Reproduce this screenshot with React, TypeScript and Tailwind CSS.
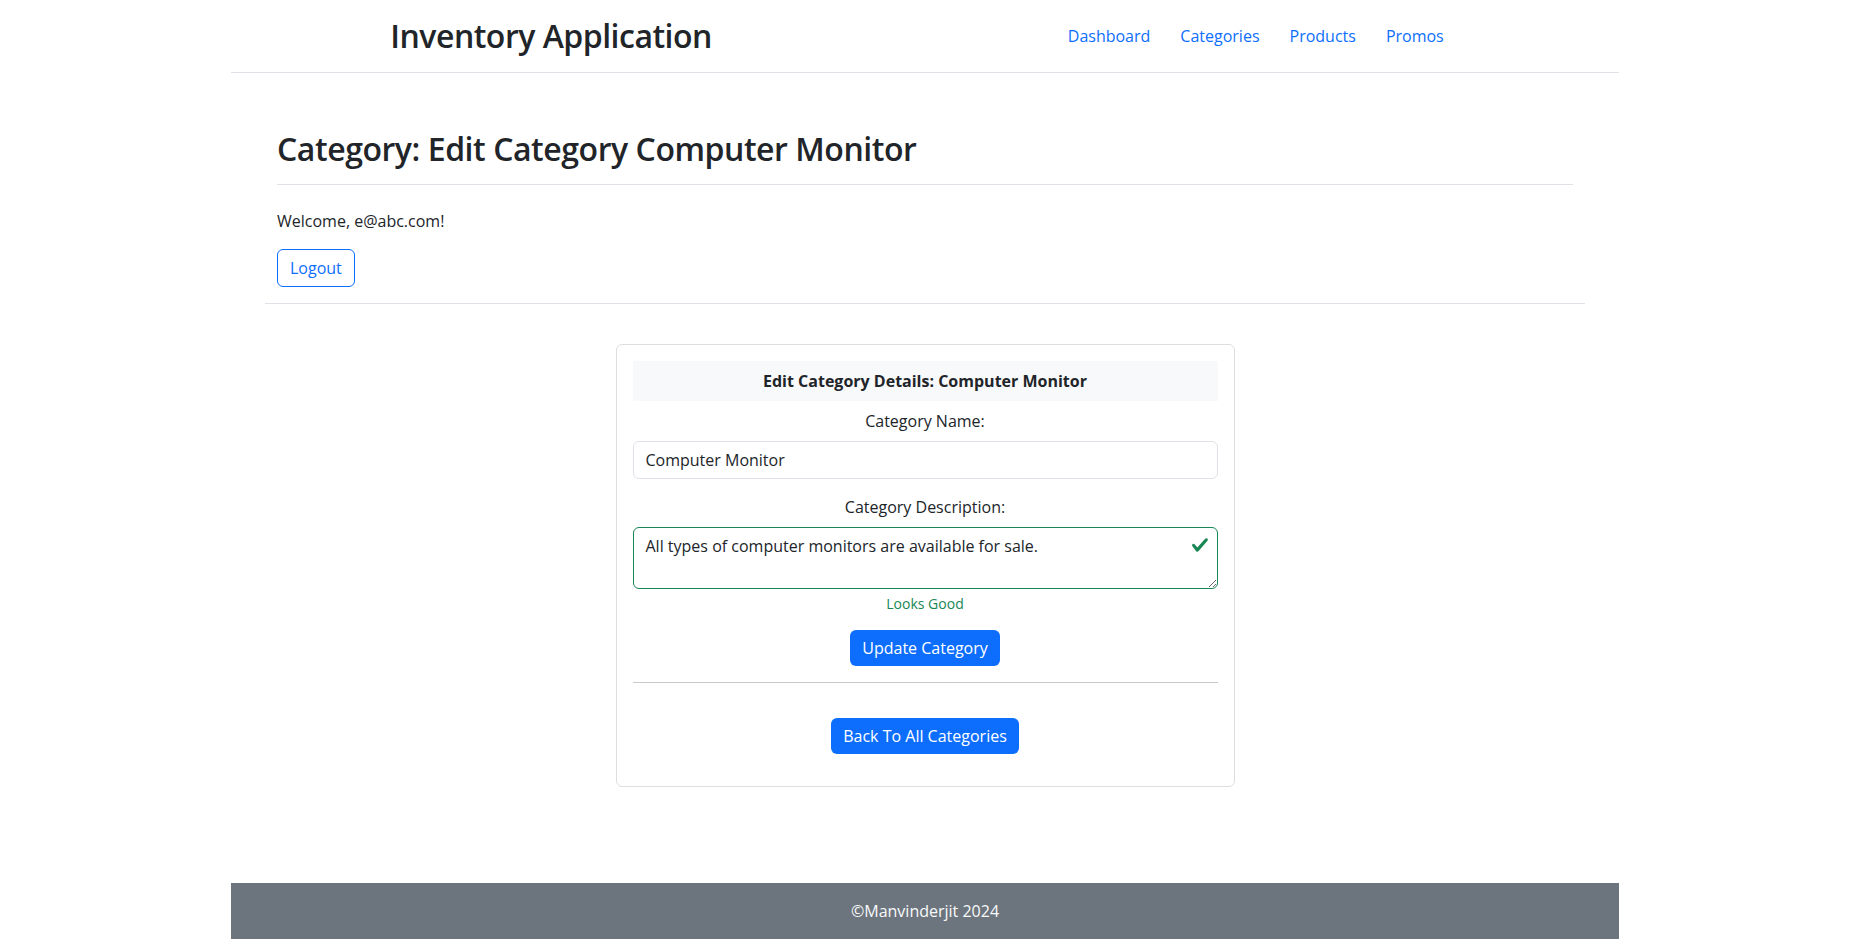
import React from "react";

function CheckIcon() {
  return (
    <svg viewBox="0 0 8 8" className="absolute right-[9px] top-[9px] w-[18px] h-[18px] pointer-events-none">
      <path
        fill="#198754"
        d="M2.3 6.73.6 4.53c-.4-1.04.46-1.4 1.1-.8l1.1 1.4 3.4-3.8c.6-.63 1.6-.27 1.2.7l-4 4.6c-.43.5-.8.4-1.1.1z"
      />
    </svg>
  );
}

export default function App() {
  const links = ["Dashboard", "Categories", "Products", "Promos"];
  return (
    <div className="min-h-screen flex flex-col bg-white text-[#212529] text-base leading-6 [font-family:'Open_Sans',sans-serif]">
      <header className="w-3/4 mx-auto h-[73px] border-b border-[#dee2e6] flex items-center justify-between pl-[159px] pr-[175px]">
        <a className="text-[32px] leading-[1.2] font-semibold tracking-[-0.5px] text-[#212529]">Inventory Application</a>
        <nav className="flex items-center gap-[30px]">
          {links.map((l) => (
            <a key={l} className="text-[#0d6efd] text-base leading-6 cursor-pointer">
              {l}
            </a>
          ))}
        </nav>
      </header>

      <main className="flex-1">
        <div className="w-[1320px] mx-auto pt-[57px]">
          <div className="px-3">
            <h2 className="text-[32px] leading-[1.2] font-semibold tracking-[-0.45px]">Category: Edit Category Computer Monitor</h2>
            <hr className="mt-4 border-0 border-t border-[#dee2e6]" />
            <p className="mt-6">Welcome, e@abc.com!</p>
            <button className="mt-4 border border-[#0d6efd] text-[#0d6efd] rounded-md px-3 py-1.5 leading-6">
              Logout
            </button>
          </div>
          <hr className="mt-4 border-0 border-t border-[#dee2e6]" />
        </div>

        <div className="w-[619px] mx-auto mt-10 border border-[#dedede] rounded-md p-4 pb-8 flex flex-col items-center">
          <div className="w-full bg-[#f8f9fa] py-2 text-center font-bold">Edit Category Details: Computer Monitor</div>
          <label className="mt-2 text-center">Category Name:</label>
          <input
            className="mt-2 w-full border border-[#dee2e6] rounded-md px-3 py-1.5 leading-6 text-[#212529] outline-none"
            defaultValue="Computer Monitor"
          />
          <label className="mt-4 text-center">Category Description:</label>
          <div className="relative mt-2 w-full">
            <textarea
              rows={2}
              className="block w-full h-[62px] border border-[#198754] rounded-md pl-3 pr-9 py-1.5 leading-6 text-[#212529] resize-y outline-none"
              defaultValue="All types of computer monitors are available for sale."
            />
            <CheckIcon />
          </div>
          <div className="mt-1 text-sm leading-[21px] text-[#198754]">Looks Good</div>
          <button className="mt-4 bg-[#0d6efd] text-white rounded-md px-3 py-1.5 leading-6">Update Category</button>
          <hr className="mt-4 w-full border-0 border-t border-[#c8c9ca]" />
          <button className="mt-[35px] bg-[#0d6efd] text-white rounded-md px-3 py-1.5 leading-6">Back To All Categories</button>
        </div>
      </main>

      <footer className="w-3/4 mx-auto bg-[#6c757d] text-[#f8f9fa] py-4 text-center leading-6">©Manvinderjit 2024</footer>
    </div>
  );
}
